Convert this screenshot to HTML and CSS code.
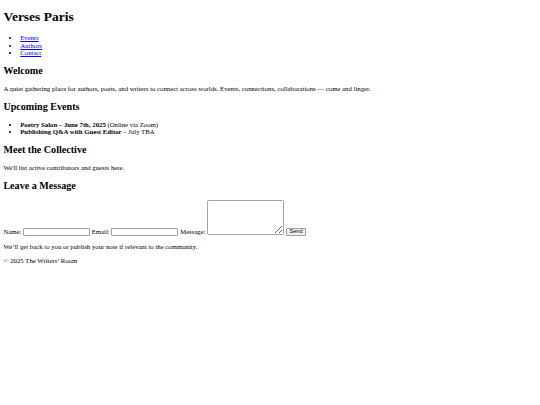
FILE: index.html
```html
<!DOCTYPE html>
<html lang="en">
<head>
<meta charset="utf-8">
<title>Verses Paris</title>
<link rel="stylesheet" href="styles.css">
</head>
<body class="page">
<header>
<h1 class="title">Verses Paris</h1>
<nav>
<ul class="list">
<li><a class="link" href="#events">Events</a></li>
<li><a class="link" href="#authors">Authors</a></li>
<li><a class="link" href="#contact">Contact</a></li>
</ul>
</nav>
</header>
<main>
<section>
<h2 class="heading">Welcome</h2>
<p class="text">A quiet gathering place for authors, poets, and writers to connect across worlds. Events, connections, collaborations — come and linger.</p>
</section>
<section id="events">
<h2 class="heading">Upcoming Events</h2>
<ul class="list">
<li><strong>Poetry Salon – June 7th, 2025</strong> (Online via Zoom)</li>
<li><strong>Publishing Q&amp;A with Guest Editor</strong> – July TBA</li>
</ul>
</section>
<section id="authors">
<h2 class="heading">Meet the Collective</h2>
<p class="text">We'll list active contributors and guests here.</p>
</section>
<section id="contact">
<h2 class="heading">Leave a Message</h2>
<form class="form">
<label class="pair"><span class="caption">Name:</span><input class="field" type="text"></label>
<label class="pair"><span class="caption">Email:</span><input class="field" type="email"></label>
<label class="pair"><span class="caption">Message:</span><textarea class="area"></textarea></label>
<button class="send" type="button">Send</button>
</form>
<p class="text">We’ll get back to you or publish your note if relevant to the community.</p>
</section>
</main>
<footer>
<p class="text">© 2025 The Writers’ Room</p>
</footer>
</body>
</html>
```
FILE: styles.css
```css
html {
  background: #fff;
}
.page {
  margin: 3.375px;
  font-family: "Liberation Serif", "Times New Roman", serif;
  font-size: 6.75px;
  line-height: 7.594px;
  color: #000;
}
.title {
  font-size: 13.5px;
  line-height: 15.61px;
  margin: 6px 0 9.045px;
}
.heading {
  font-size: 10.125px;
  line-height: 11.39px;
  margin: 8.404px 0;
}
.text {
  margin: 6.75px 0;
}
.list {
  margin: 6.75px 0;
  padding-left: 16.875px;
}
.link {
  color: #0000ee;
}
.form {
  display: flex;
  align-items: flex-end;
  gap: 1.69px;
  margin: 0;
}
.pair {
  display: flex;
  align-items: flex-end;
  gap: 1.69px;
}
.caption {
  margin-bottom: 1.24px;
}
.field {
  box-sizing: border-box;
  width: 67px;
  height: 8.86px;
  margin: 0;
  padding: 0 1px;
  border: 1px solid #a3a3a3;
  border-radius: 1px;
  font-size: 5.6px;
  background: #fff;
}
.area {
  box-sizing: border-box;
  width: 76.5px;
  height: 35px;
  margin: 0 0 1.5px;
  padding: 1px;
  border: 1px solid #a3a3a3;
  border-radius: 1.5px;
  font-size: 5.6px;
  background: #fff;
}
.send {
  box-sizing: border-box;
  height: 8.86px;
  padding: 0 2.5px;
  margin: 0 0 0 0.5px;
  border: 1px solid #a3a3a3;
  border-radius: 1px;
  background: #efefef;
  font-family: "Liberation Sans", Arial, sans-serif;
  font-size: 5.625px;
  line-height: 1;
  color: #000;
}
```
